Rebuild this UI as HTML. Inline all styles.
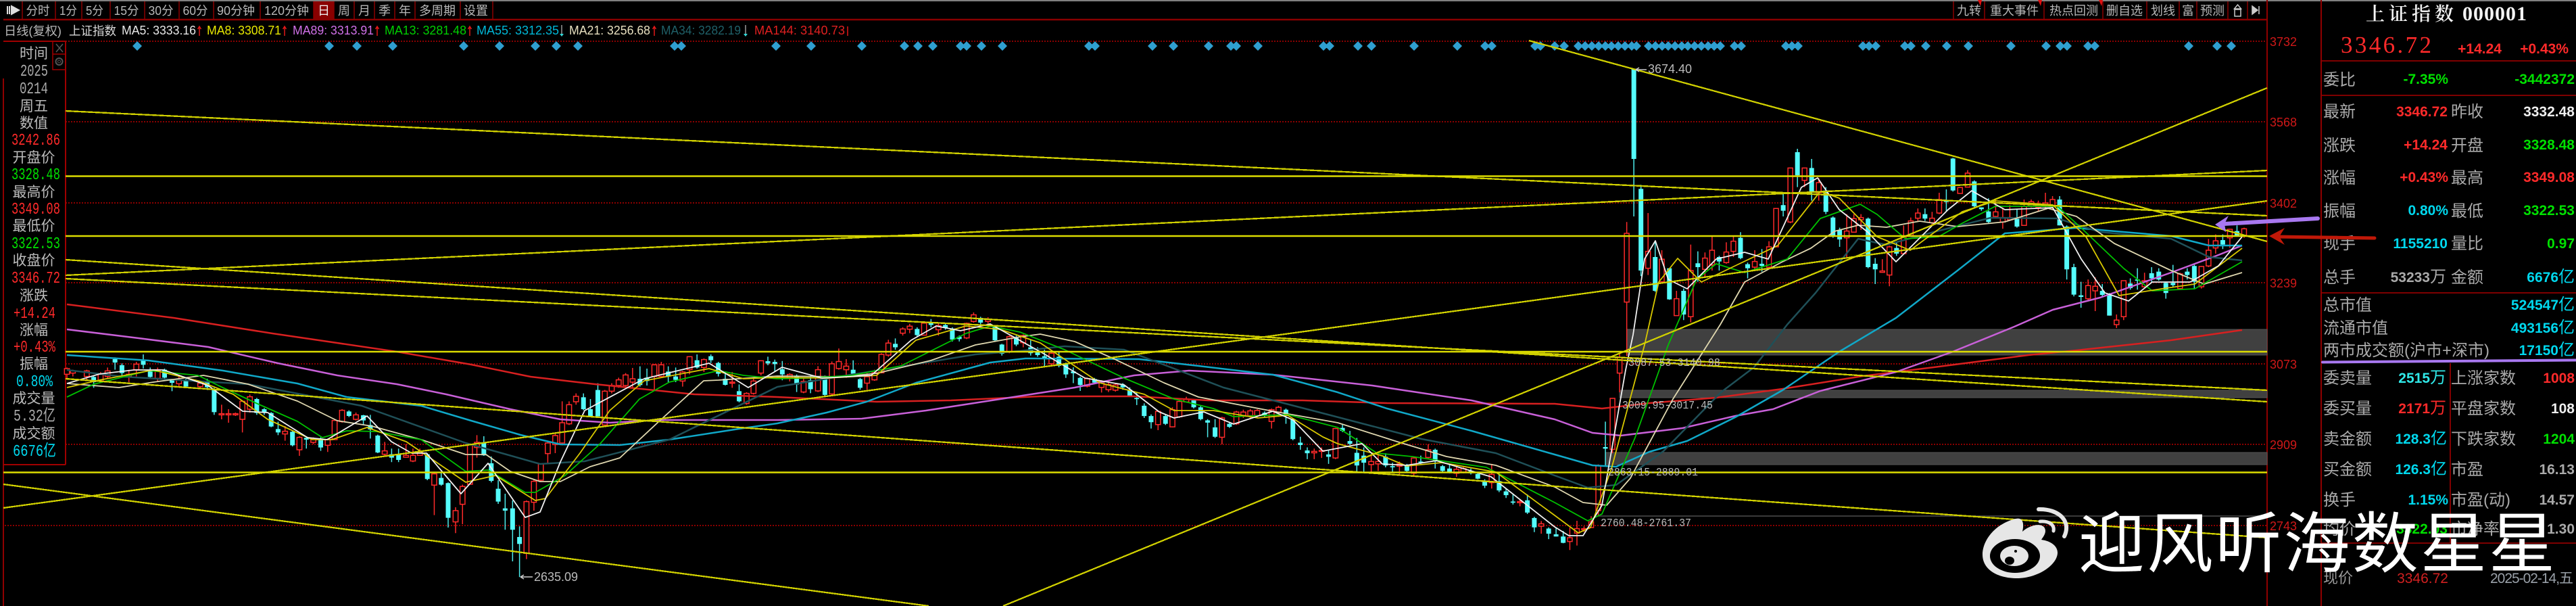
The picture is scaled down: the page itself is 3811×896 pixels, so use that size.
<!DOCTYPE html>
<html lang="zh"><head><meta charset="utf-8"><title>上证指数 000001</title>
<style>
html,body{margin:0;padding:0;background:#000;overflow:hidden}
svg{display:block}
text{font-family:"Liberation Sans","Noto Sans CJK SC",sans-serif}
.tb{font-size:18px;fill:#b8b8b8;text-anchor:middle}
.lg{font-size:18px}
.ax{font-size:18px;fill:#d01818}
.lb{font-size:21px;fill:#bcbcbc;text-anchor:middle}
.nm{font-family:"Liberation Mono","Noto Sans CJK SC",monospace;font-size:24px;text-anchor:start}
.rg{font-family:"Liberation Mono",monospace;font-size:17px;fill:#bbb}
.pl{font-size:24px;fill:#aaa}
.v{font-size:21px;font-weight:700;text-anchor:end}
.v tspan{font-weight:400;font-size:24px}
.r{fill:#ff2a2a}.g{fill:#00e000}.c{fill:#00d8ee}.w{fill:#eee}.y{fill:#aaa}
.sc path,.sc polyline{vector-effect:non-scaling-stroke}
</style></head><body>
<svg xmlns="http://www.w3.org/2000/svg" width="3811" height="896" viewBox="0 0 3811 896">
<rect width="3811" height="896" fill="#000"/>
<rect width="3811" height="2" fill="#808080"/>

<!-- frame lines -->
<path d="M5 29H3354" stroke="#8a0000" stroke-width="2.5" fill="none"/>
<path d="M33 2V29M82 2V29M121 2V29M163 2V29M214 2V29M265 2V29M316 2V29M385 2V29M464 2V29M494 2V29M524 2V29M554 2V29M584 2V29M614 2V29M681 2V29M729 2V29M2890 2V29M2936 2V29M3024 2V29M3111 2V29M3176 2V29M3224 2V29M3250 2V29M3296 2V29M3325 2V29" stroke="#8a0000" stroke-width="1.5" fill="none"/>
<rect x="464" y="2" width="30" height="27" fill="#8a0000"/>
<path d="M3354 0V896M3434 0V896M5 116V896" stroke="#900000" stroke-width="2" fill="none"/>
<path d="M2926 0h6l-2 9zM3015 0h6l-2 9zM3105 0h6l-2 9z" fill="#e01010"/>

<!-- grid -->
<path d="M97 61H3354M97 180H3354M97 300H3354M97 418H3354M97 538H3354M97 657H3354M7 777H3354" stroke="#8a0000" stroke-width="2" stroke-dasharray="2 2" fill="none"/>

<!-- toolbar text -->
<path d="M11 9v12M14 9v12M17 9l11 6-11 6v-4h0z" stroke="#ddd" stroke-width="2" fill="#ddd"/>
<text class="tb" x="56" y="22" textLength="35" lengthAdjust="spacingAndGlyphs">分时</text>
<text class="tb" x="101" y="22" textLength="26" lengthAdjust="spacingAndGlyphs">1分</text>
<text class="tb" x="140" y="22" textLength="26" lengthAdjust="spacingAndGlyphs">5分</text>
<text class="tb" x="187" y="22" textLength="37" lengthAdjust="spacingAndGlyphs">15分</text>
<text class="tb" x="238" y="22" textLength="37" lengthAdjust="spacingAndGlyphs">30分</text>
<text class="tb" x="289" y="22" textLength="37" lengthAdjust="spacingAndGlyphs">60分</text>
<text class="tb" x="349" y="22" textLength="56" lengthAdjust="spacingAndGlyphs">90分钟</text>
<text class="tb" x="424" y="22" textLength="66" lengthAdjust="spacingAndGlyphs">120分钟</text>
<text class="tb" x="479" y="22" style="fill:#eee">日</text>
<text class="tb" x="509" y="22">周</text>
<text class="tb" x="539" y="22">月</text>
<text class="tb" x="569" y="22">季</text>
<text class="tb" x="599" y="22">年</text>
<text class="tb" x="647" y="22">多周期</text>
<text class="tb" x="704" y="22">设置</text>

<text class="tb" x="2913" y="22">九转</text>
<text class="tb" x="2980" y="22">重大事件</text>
<text class="tb" x="3068" y="22">热点回测</text>
<text class="tb" x="3143" y="22">删自选</text>
<text class="tb" x="3200" y="22">划线</text>
<text class="tb" x="3237" y="22">富</text>
<text class="tb" x="3273" y="22">预测</text>
<path d="M3306 24h9V14h-9zM3310.5 7l-5 6h10z" fill="none" stroke="#ccc" stroke-width="1.5"/>
<path d="M3332 9l8 6-8 6zM3342 9v12" stroke="#ccc" stroke-width="1.5" fill="#ccc"/>

<!-- legend -->
<text class="lg" x="6" y="52" fill="#b8b8b8" textLength="85" lengthAdjust="spacingAndGlyphs">日线(复权)</text>
<text class="lg" x="102" y="52" fill="#d8d8d8" textLength="70" lengthAdjust="spacingAndGlyphs">上证指数</text>
<text class="lg" x="180" y="51" fill="#e8e8e8" textLength="110" lengthAdjust="spacingAndGlyphs">MA5: 3333.16</text>
<text class="lg" x="306" y="51" fill="#e8e800" textLength="110" lengthAdjust="spacingAndGlyphs">MA8: 3308.71</text>
<text class="lg" x="433" y="51" fill="#d070e8" textLength="120" lengthAdjust="spacingAndGlyphs">MA89: 3313.91</text>
<text class="lg" x="569" y="51" fill="#00d000" textLength="121" lengthAdjust="spacingAndGlyphs">MA13: 3281.48</text>
<text class="lg" x="705" y="51" fill="#00b8d8" textLength="122" lengthAdjust="spacingAndGlyphs">MA55: 3312.35</text>
<text class="lg" x="842" y="51" fill="#e8e0c0" textLength="120" lengthAdjust="spacingAndGlyphs">MA21: 3256.68</text>
<text class="lg" x="978" y="51" fill="#1f6068" textLength="118" lengthAdjust="spacingAndGlyphs">MA34: 3282.19</text>
<text class="lg" x="1116" y="51" fill="#e02020" textLength="134" lengthAdjust="spacingAndGlyphs">MA144: 3140.73</text>
<path d="M295 53V39m-2.500 4l2.500-4 2.500 4M421 53V39m-2.500 4l2.500-4 2.500 4M558 53V39m-2.500 4l2.500-4 2.500 4M695 53V39m-2.500 4l2.500-4 2.500 4M968 53V39m-2.500 4l2.500-4 2.500 4M1254 53V39" stroke="#e01818" stroke-width="1.500" fill="none"/>
<path d="M831 37V50M1103 37V50" stroke="#999" stroke-width="1.500"/>
<path d="M828 50h6l-3 4zM1100 50h6l-3 4z" fill="#30d8d8"/>

<!-- left data panel -->
<path d="M5 61H97M97 61V687M5 687H97" stroke="#a00000" stroke-width="2" fill="none"/>
<path d="M78 61V103H97M78 80H97" stroke="#a00000" stroke-width="1.500" fill="none"/>
<path d="M83 65L93 77M93 65L83 77" stroke="#555" stroke-width="1.500"/>
<circle cx="87.500" cy="91" r="5" fill="none" stroke="#555" stroke-width="2"/>
<circle cx="87.500" cy="91" r="2" fill="none" stroke="#555"/>

<text class="lb" x="50" y="86">时间</text>
<text class="nm y" x="30" y="112" textLength="41" lengthAdjust="spacingAndGlyphs">2025</text>
<text class="nm y" x="29" y="138" textLength="42" lengthAdjust="spacingAndGlyphs">0214</text>
<text class="lb" x="50" y="164">周五</text>
<text class="lb" x="50" y="189">数值</text>
<text class="nm r" x="17" y="214" textLength="72" lengthAdjust="spacingAndGlyphs">3242.86</text>
<text class="lb" x="50" y="240">开盘价</text>
<text class="nm g" x="17" y="265" textLength="72" lengthAdjust="spacingAndGlyphs">3328.48</text>
<text class="lb" x="50" y="291">最高价</text>
<text class="nm r" x="17" y="316" textLength="72" lengthAdjust="spacingAndGlyphs">3349.08</text>
<text class="lb" x="50" y="341">最低价</text>
<text class="nm g" x="17" y="367" textLength="72" lengthAdjust="spacingAndGlyphs">3322.53</text>
<text class="lb" x="50" y="392">收盘价</text>
<text class="nm r" x="17" y="418" textLength="72" lengthAdjust="spacingAndGlyphs">3346.72</text>
<text class="lb" x="50" y="444">涨跌</text>
<text class="nm r" x="20" y="470" textLength="62" lengthAdjust="spacingAndGlyphs">+14.24</text>
<text class="lb" x="50" y="495">涨幅</text>
<text class="nm r" x="20" y="520" textLength="62" lengthAdjust="spacingAndGlyphs">+0.43%</text>
<text class="lb" x="50" y="545">振幅</text>
<text class="nm c" x="24" y="571" textLength="54" lengthAdjust="spacingAndGlyphs">0.80%</text>
<text class="lb" x="50" y="596">成交量</text>
<text class="nm y" x="20" y="622" textLength="62" lengthAdjust="spacingAndGlyphs">5.32亿</text>
<text class="lb" x="50" y="648">成交额</text>
<text class="nm c" x="19" y="674" textLength="64" lengthAdjust="spacingAndGlyphs">6676亿</text>

<!-- gray range boxes -->
<g fill="#404040" stroke="#555" stroke-width="1">
<rect x="2407" y="487" width="947" height="38"/>
<rect x="2396" y="577" width="958" height="11"/>
<rect x="2375" y="669" width="979" height="18"/>
</g>
<rect x="2363" y="762" width="991" height="2" fill="#3a3a3a"/>

<!-- diamonds -->
<path fill="#2f9fd0" d="M203 61l7 7-7 7-7-7zM487 61l7 7-7 7-7-7zM528 61l7 7-7 7-7-7zM581 61l7 7-7 7-7-7zM686 61l7 7-7 7-7-7zM739 61l7 7-7 7-7-7zM792 61l7 7-7 7-7-7zM823 61l7 7-7 7-7-7zM855 61l7 7-7 7-7-7zM998 61l7 7-7 7-7-7zM1008 61l7 7-7 7-7-7zM1148 61l7 7-7 7-7-7zM1200 61l7 7-7 7-7-7zM1275 61l7 7-7 7-7-7zM1338 61l7 7-7 7-7-7zM1358 61l7 7-7 7-7-7zM1380 61l7 7-7 7-7-7zM1421 61l7 7-7 7-7-7zM1430 61l7 7-7 7-7-7zM1452 61l7 7-7 7-7-7zM1483 61l7 7-7 7-7-7zM1611 61l7 7-7 7-7-7zM1620 61l7 7-7 7-7-7zM1705 61l7 7-7 7-7-7zM1736 61l7 7-7 7-7-7zM1788 61l7 7-7 7-7-7zM1821 61l7 7-7 7-7-7zM1829 61l7 7-7 7-7-7zM1861 61l7 7-7 7-7-7zM1958 61l7 7-7 7-7-7zM1967 61l7 7-7 7-7-7zM2009 61l7 7-7 7-7-7zM2029 61l7 7-7 7-7-7zM2092 61l7 7-7 7-7-7zM2156 61l7 7-7 7-7-7zM2197 61l7 7-7 7-7-7zM2207 61l7 7-7 7-7-7zM2271 61l7 7-7 7-7-7zM2279 61l7 7-7 7-7-7zM2300 61l7 7-7 7-7-7zM2314 61l7 7-7 7-7-7zM2335 61l7 7-7 7-7-7zM2345 61l7 7-7 7-7-7zM2355 61l7 7-7 7-7-7zM2365 61l7 7-7 7-7-7zM2375 61l7 7-7 7-7-7zM2384 61l7 7-7 7-7-7zM2394 61l7 7-7 7-7-7zM2404 61l7 7-7 7-7-7zM2414 61l7 7-7 7-7-7zM2421 61l7 7-7 7-7-7zM2439 61l7 7-7 7-7-7zM2449 61l7 7-7 7-7-7zM2459 61l7 7-7 7-7-7zM2468 61l7 7-7 7-7-7zM2478 61l7 7-7 7-7-7zM2488 61l7 7-7 7-7-7zM2497 61l7 7-7 7-7-7zM2507 61l7 7-7 7-7-7zM2517 61l7 7-7 7-7-7zM2527 61l7 7-7 7-7-7zM2536 61l7 7-7 7-7-7zM2545 61l7 7-7 7-7-7zM2566 61l7 7-7 7-7-7zM2576 61l7 7-7 7-7-7zM2642 61l7 7-7 7-7-7zM2651 61l7 7-7 7-7-7zM2660 61l7 7-7 7-7-7zM2756 61l7 7-7 7-7-7zM2765 61l7 7-7 7-7-7zM2775 61l7 7-7 7-7-7zM2818 61l7 7-7 7-7-7zM2827 61l7 7-7 7-7-7zM2849 61l7 7-7 7-7-7zM2880 61l7 7-7 7-7-7zM2912 61l7 7-7 7-7-7zM2975 61l7 7-7 7-7-7zM3027 61l7 7-7 7-7-7zM3048 61l7 7-7 7-7-7zM3058 61l7 7-7 7-7-7zM3089 61l7 7-7 7-7-7zM3099 61l7 7-7 7-7-7zM3238 61l7 7-7 7-7-7zM3280 61l7 7-7 7-7-7zM3301 61l7 7-7 7-7-7z"/>

<!-- candles group A -->
<g class="sc" transform="translate(0,450) scale(.7334,.3333)" fill="none">
<path stroke="#4cecec" stroke-width="1.500" d="M189 315V370M232 235V290M246 262V320M289 222V285M303 280V330M332 285V340M347 330V385M375 330V370M418 330V380M432 370V490M518 415V490M533 460V490M547 478V545M561 520V580M590 560V630M618 590V640M647 590V650M704 470V500M733 490V535M747 490V595M762 578V660M790 640V700M804 640V700M862 660V780M890 745V805M904 790V990M976 585V672M991 675V790M1005 780V885M1019 840V1000M1034 870V1140M1048 985V1210M1177 395V470M1191 420V500M1206 350V500M1291 275V365M1305 285V360M1348 275V345M1363 280V345M1406 222V285M1434 222V260M1449 255V320M1463 300V360M1491 355V435M1549 232V270M1563 245V300"/>
<path stroke="#54fcfc" stroke-width="7" d="M189 322V345M232 243V258M246 270V305M289 250V268M303 290V322M332 290V325M347 335V348M375 335V365M418 345V368M432 375V478M518 420V482M533 465V480M547 482V542M561 553V568M590 565V625M618 592V600M647 595V635M704 475V495M733 492V515M747 535V555M762 582V657M790 665V680M804 667V690M862 665V775M890 770V800M904 793V947M976 612V670M991 705V783M1005 818V875M1019 905V915M1034 905V1000M1048 1032V1063M1177 412V465M1191 465V495M1206 380V497M1291 330V358M1305 325V340M1348 298V320M1363 320V335M1406 248V280M1434 230V248M1449 260V308M1463 330V357M1491 385V430M1549 252V262M1563 255V265"/>
<path stroke="#ff2a2a" stroke-width="1.500" d="M135 280V330M147 290V320M175 290V335M203 300V350M217 280V330M260 290V345M275 255V320M318 280V345M361 320V365M404 340V370M447 445V510M461 465V525M475 480V495M489 425V568M504 400V480M575 540V605M604 585V672M632 590V620M661 595V655M675 510V600M690 465V525M718 480V515M776 610V672M819 620V680M833 640V700M847 640V670M876 745V935M919 900V1015M933 800V975M948 618V800M962 580V680M1062 870V1130M1077 780V915M1091 705V785M1105 610V705M1120 575V660M1134 430V625M1148 430V535M1162 395V445M1220 380V540M1234 350V395M1248 325V370M1262 305V365M1276 282V372M1320 265V380M1334 255V325M1377 295V365M1391 230V310M1420 240V300M1477 300V370M1506 390V445M1520 330V400M1535 248V315"/>
<path stroke="#ff2a2a" stroke-width="1.500" fill="#000" d="M130 285h10V310h-10zM142 295h10V305h-10zM170 295h10V320h-10zM198 310h10V340h-10zM212 295h10V320h-10zM255 310h10V320h-10zM270 265h10V290h-10zM313 290h10V328h-10zM356 335h10V352h-10zM399 350h10V365h-10zM442 485h10V490h-10zM456 485h10V490h-10zM470 485h10V490h-10zM484 430h10V510h-10zM499 410h10V465h-10zM570 563h10V575h-10zM599 590h10V645h-10zM627 595h10V612h-10zM656 600h10V625h-10zM670 515h10V600h-10zM685 470h10V520h-10zM713 490h10V510h-10zM771 650h10V665h-10zM814 670h10V678h-10zM828 670h10V695h-10zM842 655h10V670h-10zM871 752h10V802h-10zM914 915h10V965h-10zM928 808h10V887h-10zM943 622h10V798h-10zM957 612h10V635h-10zM1057 875h10V1105h-10zM1072 785h10V878h-10zM1086 708h10V780h-10zM1100 615h10V662h-10zM1115 582h10V622h-10zM1129 525h10V615h-10zM1143 445h10V530h-10zM1157 408h10V432h-10zM1215 385h10V535h-10zM1229 360h10V385h-10zM1243 335h10V360h-10zM1257 313h10V360h-10zM1271 330h10V345h-10zM1315 268h10V320h-10zM1329 268h10V320h-10zM1372 300h10V340h-10zM1386 232h10V290h-10zM1415 245h10V280h-10zM1472 345h10V350h-10zM1501 395h10V440h-10zM1515 340h10V395h-10zM1530 250h10V305h-10z"/>
</g>

<!-- candles group B -->
<g class="sc" transform="translate(1150,350) scale(.7334,.348)" fill="none">
<path stroke="#4cecec" stroke-width="1.500" d="M10 528V610M39 585V660M67 590V665M96 590V680M153 525V590M167 600V650M238 432V480M282 385V425M310 350V385M339 365V395M353 385V445M367 420V445M410 340V375M439 375V445M453 455V505M482 420V465M511 440V505M525 470V510M539 480V550M568 490V555M582 535V600M597 555V622M611 595V655M640 600V625M697 622V650M711 640V680M725 660V715M740 708V770M754 755V815M783 755V800M840 690V730M854 720V780M868 775V852M883 775V855M912 790V812M983 742V765M1026 730V795M1040 770V865M1055 850V905M1069 895V945M1112 905V965M1140 795V830M1155 825V885M1169 855V1000M1183 895V1005M1227 920V980M1241 960V1000M1270 965V1000M1298 930V965M1327 900V985M1342 970V1000M1356 970V1005M1399 985V1010M1413 1000V1030M1427 1030V1068M1456 1000V1085M1470 1070V1110M1484 1095V1138M1513 1095V1178M1527 1190V1255M1556 1235V1285"/>
<path stroke="#54fcfc" stroke-width="7" d="M10 563V585M39 590V628M67 610V648M96 595V672M153 565V582M167 605V642M238 455V470M282 392V418M310 365V375M339 375V388M353 390V437M367 425V435M410 345V365M439 380V440M453 458V497M482 430V458M511 470V495M525 487V503M539 508V518M568 510V548M582 542V585M597 572V580M611 600V630M640 605V620M697 630V640M711 650V675M725 685V690M740 718V762M754 762V788M783 762V795M840 695V725M854 725V775M868 780V790M883 810V850M912 795V808M983 748V758M1026 735V760M1040 775V860M1055 875V885M1069 908V920M1112 925V935M1140 812V825M1155 868V880M1169 918V972M1183 930V960M1227 935V972M1241 975V980M1270 970V995M1298 955V960M1327 905V955M1342 975V995M1356 985V1000M1399 995V1005M1413 1008V1028M1427 1038V1058M1456 1038V1078M1470 1082V1098M1484 1125V1130M1513 1120V1172M1527 1195V1235M1556 1240V1262"/>
<path stroke="#ff2a2a" stroke-width="1.500" d="M25 580V615M53 600V665M82 550V660M110 530V675M124 475V565M139 520V600M181 580V650M196 565V612M210 495V580M224 438V510M253 385V420M267 370V410M296 365V420M325 365V420M382 365V435M396 322V365M425 342V370M468 420V495M496 415V470M553 490V545M625 598V640M654 610V662M668 620V660M682 625V658M768 738V822M797 725V810M811 695V770M825 680V705M897 765V882M926 740V800M940 735V770M954 732V775M968 733V770M997 730V815M1011 718V765M1083 900V945M1098 895V940M1126 812V945M1198 925V1000M1212 920V995M1255 955V1010M1284 935V1018M1313 882V945M1370 975V1020M1384 975V1005M1441 965V1070M1498 1115V1145M1541 1208V1262"/>
<path stroke="#ff2a2a" stroke-width="1.500" fill="#000" d="M20 585h10V600h-10zM48 615h10V660h-10zM77 565h10V655h-10zM105 540h10V668h-10zM119 530h10V560h-10zM134 550h10V565h-10zM176 595h10V622h-10zM191 578h10V608h-10zM205 500h10V578h-10zM219 452h10V503h-10zM248 392h10V410h-10zM262 380h10V393h-10zM291 367h10V418h-10zM320 378h10V395h-10zM377 368h10V430h-10zM391 332h10V360h-10zM420 352h10V360h-10zM463 425h10V488h-10zM491 420h10V450h-10zM548 495h10V540h-10zM620 603h10V635h-10zM649 615h10V640h-10zM663 628h10V650h-10zM677 630h10V652h-10zM763 742h10V798h-10zM792 735h10V808h-10zM806 700h10V765h-10zM820 690h10V702h-10zM892 770h10V852h-10zM921 745h10V795h-10zM935 745h10V760h-10zM949 740h10V760h-10zM963 738h10V760h-10zM992 735h10V785h-10zM1006 725h10V745h-10zM1078 912h10V918h-10zM1093 908h10V912h-10zM1121 815h10V940h-10zM1193 955h10V968h-10zM1207 955h10V965h-10zM1250 965h10V975h-10zM1279 940h10V1005h-10zM1308 905h10V938h-10zM1365 988h10V1005h-10zM1379 985h10V1000h-10zM1436 1010h10V1045h-10zM1493 1125h10V1130h-10zM1536 1220h10V1230h-10z"/>
</g>

<!-- candles group C -->
<g class="sc" transform="translate(2300,480) scale(.7015,.3333)" fill="none">
<path stroke="#4cecec" stroke-width="1.500" d="M3 900V940M18 915V970M107 430V625"/>
<path stroke="#54fcfc" stroke-width="7" d="M3 930V940M18 940V968M107 543V550"/>
<path stroke="#ff2a2a" stroke-width="1.500" d="M32 900V1000M47 870V980M62 895V920M77 850V900M92 620V850M122 325V570M137 130V300"/>
<path stroke="#ff2a2a" stroke-width="1.500" fill="#000" d="M27 945h10V962h-10zM42 905h10V925h-10zM57 905h10V910h-10zM72 875h10V900h-10zM87 625h10V825h-10zM117 327h10V553h-10zM132 145h10V215h-10z"/>
</g>

<!-- candles group D -->
<g class="sc" transform="translate(2300,50) scale(.7015,.3333)" fill="none">
<path stroke="#4cecec" stroke-width="1.500" d="M167 155V810M182 670V1075M212 920V1145M242 1040V1180M272 1130V1270M302 965V1100M347 985V1050M392 880V1000M407 1015V1085M437 955V1055M482 710V810M512 510V680M542 555V740M572 680V800M587 810V905M601 860V945M661 815V1040M676 995V1110M721 925V985M781 775V830M826 690V790M840 550V700M885 650V770M900 770V785M915 730V840M975 780V860M1065 720V850M1080 850V1090M1095 1020V1165M1110 1100V1215M1155 1110V1165M1170 1150V1250M1214 1085V1135M1229 1040V1135M1259 1035V1100M1274 1040V1095M1289 1100V1175M1304 1025V1125M1334 1040V1090M1349 1020V1130M1409 890V955M1439 850V900"/>
<path stroke="#54fcfc" stroke-width="7" d="M167 155V555M182 688V1050M212 990V1140M242 1040V1178M272 1140V1245M302 1018V1035M347 990V1010M392 905V995M407 1022V1040M437 1020V1030M482 760V785M512 525V628M542 595V700M572 695V790M587 815V900M601 870V912M661 820V1035M676 1020V1045M721 950V975M781 800V820M826 740V746M840 553V695M885 655V765M900 770V778M915 788V835M975 820V855M1065 735V850M1080 855V1045M1095 1035V1157M1110 1160V1167M1155 1140V1158M1170 1158V1250M1214 1108V1128M1229 1090V1095M1259 1062V1085M1274 1055V1090M1289 1105V1150M1304 1105V1115M1334 1055V1070M1349 1030V1100M1409 915V935M1439 875V895"/>
<path stroke="#ff2a2a" stroke-width="1.500" d="M152 835V1430M197 795V1070M226 960V1100M257 1140V1250M287 935V1280M317 970V1080M332 900V1050M362 925V1020M377 900V990M422 960V1050M452 920V1040M467 775V945M497 595V840M527 595V680M557 640V740M616 800V990M631 800V880M646 800V870M691 1000V1060M706 940V1120M736 850V975M751 815V900M766 775V830M796 790V850M811 705V800M855 680V710M871 605V680M930 735V815M945 770V865M960 760V830M990 735V850M1005 735V770M1020 740V790M1035 705V770M1050 720V780M1125 1090V1185M1140 1080V1230M1185 1245V1305M1200 1095V1270M1244 1060V1130M1319 1060V1135M1364 1030V1130M1379 910V1035M1394 890V975M1424 865V950M1454 860V905"/>
<path stroke="#ff2a2a" stroke-width="1.500" fill="#000" d="M147 885h10V1190h-10zM192 965h10V1040h-10zM221 1000h10V1100h-10zM252 1175h10V1250h-10zM282 1050h10V1255h-10zM312 995h10V1045h-10zM327 960h10V1025h-10zM357 968h10V1015h-10zM372 920h10V965h-10zM417 1010h10V1035h-10zM447 945h10V1035h-10zM462 775h10V945h-10zM492 595h10V835h-10zM522 595h10V650h-10zM552 660h10V705h-10zM611 875h10V905h-10zM626 820h10V880h-10zM641 815h10V825h-10zM686 1052h10V1058h-10zM701 945h10V1070h-10zM731 900h10V975h-10zM746 830h10V895h-10zM761 795h10V818h-10zM791 818h10V838h-10zM806 735h10V795h-10zM850 682h10V708h-10zM866 618h10V680h-10zM925 790h10V810h-10zM940 815h10V835h-10zM955 815h10V825h-10zM985 765h10V850h-10zM1000 745h10V765h-10zM1015 755h10V770h-10zM1030 750h10V765h-10zM1045 735h10V765h-10zM1120 1117h10V1175h-10zM1135 1120h10V1140h-10zM1180 1270h10V1290h-10zM1195 1095h10V1255h-10zM1239 1095h10V1122h-10zM1314 1065h10V1130h-10zM1359 1032h10V1122h-10zM1374 960h10V1030h-10zM1389 918h10V950h-10zM1419 867h10V905h-10zM1449 865h10V895h-10z"/>
</g>

<!-- moving averages -->
<g fill="none" stroke-linejoin="round">
<polyline stroke="#d82020" stroke-width="2.500" points="99,450 257,470 403,493 587,520 697,539 785,557 880,568 1027,583 1150,587 1297,594 1407,592 1539,586 1678,586 1788,592 1927,592 2052,596 2300,597 2370,604 2440,596 2539,588 2637,575 2756,556 2861,543 3001,525 3072,518 3212,503 3317,488"/>
<polyline stroke="#c860d8" stroke-width="2.500" points="99,487 205,500 308,513 411,537 499,555 587,568 660,583 755,605 829,620 902,625 975,621 1150,621 1275,619 1370,607 1480,590 1590,573 1678,555 1759,548 1883,554 2030,570 2177,592 2300,620 2356,640 2398,644 2489,633 2567,615 2623,605 2693,578 2805,550 2889,520 2980,483 3037,458 3107,440 3212,403 3282,377 3317,363"/>
<polyline stroke="#10a8c8" stroke-width="2.500" points="99,525 220,533 330,548 440,567 513,587 623,600 697,622 770,643 829,657 917,658 990,650 1100,633 1150,626 1223,610 1282,594 1355,566 1465,536 1517,530 1685,531 1773,541 1883,554 1979,580 2052,604 2177,637 2300,672 2356,688 2391,690 2440,668 2496,652 2567,617 2637,577 2721,520 2805,470 2896,400 2966,345 3072,337 3142,343 3212,349 3268,363 3317,363"/>
<polyline stroke="#1f5058" stroke-width="2.500" points="99,547 183,557 367,568 535,600 689,655 799,686 865,682 990,650 1150,572 1253,555 1443,524 1509,519 1575,512 1663,517 1737,545 1810,573 1957,611 2103,649 2213,670 2300,703 2349,721 2391,717 2461,667 2546,580 2595,543 2644,480 2686,433 2749,353 2791,362 2861,343 2945,322 3044,323 3107,343 3212,353 3268,380 3317,385"/>
<polyline stroke="#e0d8b0" stroke-width="1.800" points="99,567 176,573 227,565 301,555 367,568 440,593 499,622 550,630 623,650 689,672 719,672 755,697 799,712 829,712 873,690 917,677 975,623 1041,563 1063,562 1150,556 1245,557 1297,552 1377,533 1443,510 1509,498 1539,494 1590,505 1649,531 1722,566 1773,587 1883,608 1979,625 2067,653 2140,675 2213,688 2300,720 2342,743 2377,747 2412,707 2475,590 2545,480 2581,417 2637,387 2679,367 2714,342 2749,333 2791,336 2840,327 2896,335 2966,328 3030,308 3072,320 3128,360 3212,400 3261,420 3317,403"/>
<polyline stroke="#00c000" stroke-width="1.800" points="99,587 139,568 220,548 293,555 323,570 381,597 440,623 477,647 513,637 557,638 623,650 689,697 722,695 777,728 792,728 836,703 887,657 946,590 990,565 1063,548 1100,555 1150,560 1194,559 1260,555 1333,541 1429,493 1465,482 1509,491 1575,517 1663,559 1737,590 1795,604 1825,616 1905,613 1979,632 2037,670 2089,675 2199,691 2300,743 2349,770 2370,760 2419,647 2468,510 2510,413 2539,390 2581,403 2644,383 2693,323 2752,302 2777,317 2819,353 2868,350 2903,330 2952,305 3044,305 3079,337 3142,397 3184,430 3247,427 3317,387"/>
<polyline stroke="#d8c800" stroke-width="1.800" points="99,573 147,562 227,547 293,563 345,583 396,620 462,650 491,650 543,632 601,653 645,683 689,713 733,703 792,740 807,737 858,670 902,607 953,563 1049,545 1100,560 1150,558 1223,559 1297,555 1355,503 1429,482 1480,487 1539,507 1627,566 1693,583 1737,607 1795,607 1861,618 1905,614 1957,646 1979,656 2045,674 2081,689 2133,684 2213,698 2300,762 2335,788 2353,780 2384,693 2433,510 2454,417 2482,382 2517,417 2567,393 2630,363 2693,283 2721,293 2777,350 2826,370 2903,313 2952,297 3037,303 3086,350 3135,437 3198,427 3247,420 3317,367"/>
<polyline stroke="#f0f0f0" stroke-width="1.800" points="99,567 147,553 198,547 242,547 308,570 359,608 396,610 455,647 484,650 543,615 579,653 609,670 631,670 682,730 722,685 777,765 799,757 829,683 865,607 953,560 1049,537 1107,573 1157,543 1216,559 1289,555 1348,503 1385,482 1421,489 1465,479 1546,524 1605,559 1663,569 1715,609 1737,618 1781,609 1825,627 1883,608 1913,621 1957,667 2015,656 2045,686 2081,688 2125,681 2206,705 2300,779 2321,792 2342,792 2370,747 2405,547 2416,495 2433,383 2449,356 2468,413 2496,427 2539,383 2581,373 2616,383 2665,277 2689,263 2721,310 2763,343 2805,387 2882,310 2917,282 2966,310 3037,307 3079,383 3114,433 3149,445 3184,417 3240,417 3282,393 3317,350"/>
</g>

<!-- yellow trend lines -->
<g stroke="#cfcf00" stroke-width="2.300" fill="none" shape-rendering="crispEdges">
<path d="M97 164L3354 319M97 407L3354 252M97 384L3354 594M97 412L3354 577M2262 60L3354 357M1484 896L3354 130M5 751L3354 297M5 716L1374 896M97 560L3354 795"/>
</g>
<path d="M97 260.500H3354M97 349H3354M97 520H3354M5 698.500H3354" stroke="#dcdc00" stroke-width="2.500" fill="none"/>

<!-- chart labels -->
<text x="2438" y="108" style="font-size:18px" fill="#bbb">3674.40</text>
<path d="M2420 103H2436M2420 103l5-3M2420 103l5 3" stroke="#ccc" stroke-width="1.500" fill="none"/>
<text x="790" y="859" style="font-size:18px" fill="#bbb">2635.09</text>
<path d="M770 853H788M770 853l5-3M770 853l5 3" stroke="#ccc" stroke-width="1.500" fill="none"/>
<text class="rg" x="2409" y="541" textLength="136" lengthAdjust="spacingAndGlyphs">3087.53-3140.98</text>
<text class="rg" x="2400" y="604" textLength="134" lengthAdjust="spacingAndGlyphs">3009.95-3017.45</text>
<text class="rg" x="2379" y="703" textLength="133" lengthAdjust="spacingAndGlyphs">2863.15-2889.01</text>
<text class="rg" x="2368" y="778" textLength="134" lengthAdjust="spacingAndGlyphs">2760.48-2761.37</text>

<!-- axis labels -->
<text class="ax" x="3358" y="68">3732</text>
<text class="ax" x="3358" y="187">3568</text>
<text class="ax" x="3358" y="307">3402</text>
<text class="ax" x="3358" y="425">3239</text>
<text class="ax" x="3358" y="545">3073</text>
<text class="ax" x="3358" y="664">2909</text>
<text class="ax" x="3358" y="784">2743</text>

<!-- right panel -->
<path d="M3434 90H3811M3434 141H3811M3434 433H3811M3434 803H3811M3625 537V803" stroke="#900000" stroke-width="1.800" fill="none"/>
<text x="3500" y="30" style="font-family:'Noto Serif CJK SC',serif;font-size:28px;font-weight:600" fill="#f4f4f4" textLength="130">上证指数</text>
<text x="3643" y="30" style="font-family:'Liberation Serif',serif;font-size:30px;font-weight:700" fill="#f4f4f4" textLength="95">000001</text>
<text x="3463" y="78" style="font-family:'Liberation Serif',serif;font-size:35px" fill="#ff2a2a" textLength="134">3346.72</text>
<text class="v r" x="3701" y="79">+14.24</text>
<text class="v r" x="3800" y="79">+0.43%</text>

<text class="pl" x="3437" y="126">委比</text>
<text class="v g" x="3622" y="124">-7.35%</text>
<text class="v g" x="3809" y="124">-3442372</text>

<text class="pl" x="3437" y="173">最新</text><text class="v r" x="3621" y="172">3346.72</text>
<text class="pl" x="3626" y="173">昨收</text><text class="v w" x="3809" y="172">3332.48</text>
<text class="pl" x="3437" y="223">涨跌</text><text class="v r" x="3621" y="221">+14.24</text>
<text class="pl" x="3626" y="223">开盘</text><text class="v g" x="3809" y="221">3328.48</text>
<text class="pl" x="3437" y="271">涨幅</text><text class="v r" x="3622" y="269">+0.43%</text>
<text class="pl" x="3626" y="271">最高</text><text class="v r" x="3809" y="269">3349.08</text>
<text class="pl" x="3437" y="320">振幅</text><text class="v c" x="3622" y="318">0.80%</text>
<text class="pl" x="3626" y="320">最低</text><text class="v g" x="3809" y="318">3322.53</text>
<text class="pl" x="3437" y="368">现手</text><text class="v c" x="3621" y="367">1155210</text>
<text class="pl" x="3626" y="368">量比</text><text class="v g" x="3809" y="367">0.97</text>
<text class="pl" x="3437" y="418">总手</text><text class="v y" x="3619" y="417">53233<tspan>万</tspan></text>
<text class="pl" x="3626" y="418">金额</text><text class="v c" x="3809" y="417">6676<tspan>亿</tspan></text>

<text class="pl" x="3437" y="459">总市值</text><text class="v c" x="3809" y="458">524547<tspan>亿</tspan></text>
<text class="pl" x="3437" y="493">流通市值</text><text class="v c" x="3809" y="492">493156<tspan>亿</tspan></text>
<text class="pl" x="3437" y="526">两市成交额(沪市+深市)</text><text class="v c" x="3809" y="525">17150<tspan>亿</tspan></text>
<path d="M3436 535.500L3811 532.500" stroke="#a878f0" stroke-width="4" stroke-linecap="round"/>

<text class="pl" x="3437" y="567">委卖量</text><text class="v" x="3619" y="566" fill="#30e8e8">2515<tspan>万</tspan></text>
<text class="pl" x="3626" y="567">上涨家数</text><text class="v r" x="3809" y="566">1008</text>
<text class="pl" x="3437" y="612">委买量</text><text class="v r" x="3619" y="611">2171<tspan>万</tspan></text>
<text class="pl" x="3626" y="612">平盘家数</text><text class="v w" x="3809" y="611">108</text>
<text class="pl" x="3437" y="657">卖金额</text><text class="v c" x="3620" y="656">128.3<tspan>亿</tspan></text>
<text class="pl" x="3626" y="657">下跌家数</text><text class="v g" x="3809" y="656">1204</text>
<text class="pl" x="3437" y="702">买金额</text><text class="v c" x="3620" y="701">126.3<tspan>亿</tspan></text>
<text class="pl" x="3626" y="702">市盈</text><text class="v y" x="3809" y="701">16.13</text>
<text class="pl" x="3437" y="747">换手</text><text class="v c" x="3622" y="746">1.15%</text>
<text class="pl" x="3626" y="747">市盈(动)</text><text class="v y" x="3809" y="746">14.57</text>
<text class="pl" x="3437" y="790">均价</text><text class="v g" x="3621" y="789">3322.03</text>
<text class="pl" x="3626" y="790">市净率</text><text class="v y" x="3809" y="789">1.30</text>
<text x="3437" y="862" style="font-size:22px" fill="#999">现价</text>
<text x="3622" y="862" style="font-size:21px;text-anchor:end" fill="#d02020">3346.72</text>
<text x="3684" y="862" style="font-size:21px" fill="#99a0a8" textLength="123">2025-02-14,五</text>

<!-- hand-drawn arrows -->
<path d="M3290 331L3429 323" stroke="#a878f0" stroke-width="6" stroke-linecap="round" fill="none"/>
<path d="M3277 332L3297 319L3291 331L3293 343Z" fill="#a878f0"/>
<path d="M3368 350L3513 352" stroke="#c01808" stroke-width="5" stroke-linecap="round" fill="none"/>
<path d="M3357 349L3380 337L3372 350L3380 362Z" fill="#c01808"/>

<!-- watermark -->
<path d="M2933 820C2933 800 2950 775 2982 767C2995 764 2994 778 2992 786C3005 774 3026 772 3026 785C3026 790 3022 795 3020 798C3035 800 3044 808 3044 817C3044 835 3015 855 2984 855C2955 855 2933 842 2933 820Z" fill="#e6e6e6"/>
<ellipse cx="2981" cy="822" rx="37" ry="25" fill="#000"/>
<ellipse cx="2980" cy="822" rx="21" ry="15" fill="#e6e6e6"/>
<ellipse cx="2973" cy="829" rx="7" ry="6" fill="#000"/>
<circle cx="2982" cy="815" r="2" fill="#000"/>
<path d="M3016 753C3045 752 3065 770 3054 793" stroke="#e6e6e6" stroke-width="6" fill="none" stroke-linecap="round"/>
<path d="M3018 771C3030 770 3040 775 3038 785" stroke="#e6e6e6" stroke-width="5" fill="none" stroke-linecap="round"/>
<text x="3075" y="838" style="font-family:'Noto Sans CJK SC',sans-serif;font-size:98px" fill="#fff" textLength="705">迎风听海数星星</text>
</svg>
</body></html>
